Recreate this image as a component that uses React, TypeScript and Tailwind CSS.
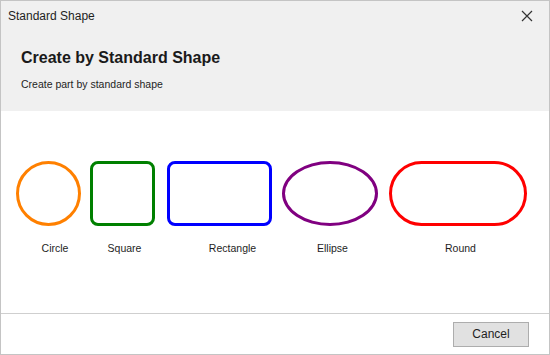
const shapes = [
  { name: 'Circle', box: 'w-[65px] rounded-full border-[#ff8000]', label: 'ml-[13px]', gap: 'mr-[9px]' },
  { name: 'Square', box: 'w-[65px] rounded-[8px] border-[#008000]', label: 'ml-[4px]', gap: 'mr-[12px]' },
  { name: 'Rectangle', box: 'w-[105px] rounded-[8px] border-[#0000ff]', label: 'ml-[26px]', gap: 'mr-[10px]' },
  { name: 'Ellipse', box: 'w-[96px] rounded-[50%] border-[#800080]', label: 'ml-[5px]', gap: 'mr-[11px]' },
  { name: 'Round', box: 'w-[138px] rounded-full border-[#ff0000]', label: 'ml-[5px]', gap: '' },
];

export default function App() {
  return (
    <div
      className="w-[550px] h-[355px] border border-[#c4c4c4] bg-white flex flex-col text-[#1e1e1e]"
      style={{ fontFamily: '"Liberation Sans", Arial, sans-serif' }}
    >
      {/* title bar */}
      <div className="h-[29px] bg-[#f0f0f0] flex items-center justify-between pl-[7px] pr-[16px]">
        <span className="text-[12px]">Standard Shape</span>
        <svg width="12" height="12" viewBox="0 0 12 12" className="text-[#333]">
          <path d="M1 1 L11 11 M11 1 L1 11" stroke="currentColor" strokeWidth="1.2" />
        </svg>
      </div>

      {/* header */}
      <div className="h-[81px] bg-[#f0f0f0] pl-[20px] pt-[17px]">
        <h1 className="text-[16px] font-bold text-[#1a1a1a] leading-[21px]">Create by Standard Shape</h1>
        <p className="text-[10.5px] mt-[9px] leading-[14px]">Create part by standard shape</p>
      </div>

      {/* shapes */}
      <div className="flex-1 pt-[50px] pl-[15px]">
        <div className="flex items-start">
          {shapes.map((s) => (
            <div key={s.name} className={`flex flex-col items-center ${s.gap}`}>
              <div className={`h-[65px] border-[3px] ${s.box}`} />
              <span className={`mt-[15px] text-[10.5px] leading-[14px] ${s.label}`}>{s.name}</span>
            </div>
          ))}
        </div>
      </div>

      {/* footer */}
      <div className="h-[41px] border-t border-[#cfcfcf] flex items-center justify-end pr-[20px]">
        <button className="w-[76px] h-[25px] bg-[#e1e1e1] border border-[#adadad] text-[12px] text-[#1e1e1e]">
          Cancel
        </button>
      </div>
    </div>
  );
}
